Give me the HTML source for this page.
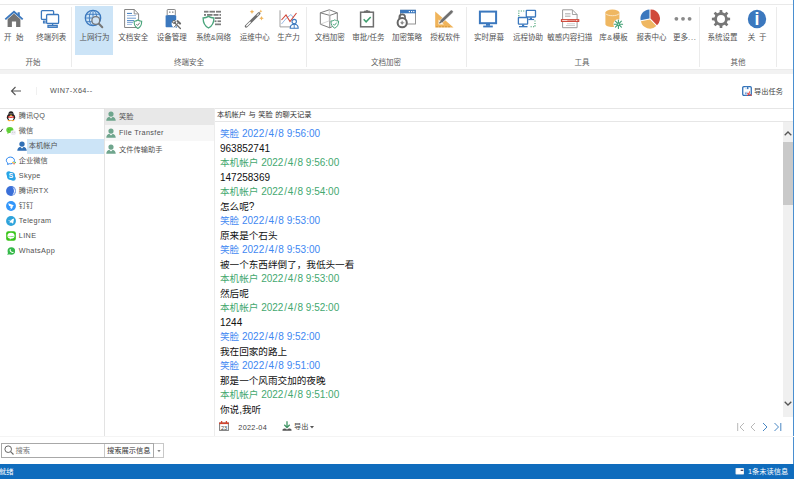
<!DOCTYPE html>
<html lang="zh-CN">
<head>
<meta charset="utf-8">
<title>上网行为</title>
<style>
*{box-sizing:border-box;margin:0;padding:0}
html,body{width:794px;height:479px;overflow:hidden;background:#fff}
body{position:relative;font-family:"Liberation Sans","Noto Sans CJK SC",sans-serif;color:#444;font-size:7.25px;line-height:1}
i{font-style:normal}
#ribbon{position:absolute;left:0;top:0;width:794px;height:69px;background:#fff}
#topline{position:absolute;left:0;top:4px;width:793px;height:1px;background:#e9e9e9}
#gap{position:absolute;left:0;top:69px;width:794px;height:5.3px;background:#f2f2f2;border-top:1px solid #ebebeb}
.selbg{position:absolute;left:75px;top:6px;width:38px;height:48.500px;background:#cce4f7}
.ic{position:absolute;top:9px;width:20px;height:20px;overflow:visible}
.lb{position:absolute;top:32.5px;width:60px;text-align:center;font-size:7.5px;line-height:10px;color:#525252;white-space:nowrap}
.sep{position:absolute;top:7px;width:1px;height:59.5px;background:#ebebeb}
.gl{position:absolute;top:57.5px;width:60px;text-align:center;font-size:7.5px;line-height:10px;color:#606060;white-space:nowrap}
#bar{position:absolute;left:0;top:74px;width:794px;height:34px;background:#fff}
#barline{position:absolute;left:0;top:108px;width:794px;height:1px;background:#e6e6e6}
#back{position:absolute;left:10px;top:12px;width:12px;height:10px}
#bsep{position:absolute;left:36px;top:13px;width:1px;height:8px;background:#f0f0f0}
#host{position:absolute;left:50px;top:12px;font-size:7.25px;line-height:10px;color:#505050;letter-spacing:.42px}
#expic{position:absolute;left:741.8px;top:12px;width:10px;height:10px}
#exp{position:absolute;left:754px;top:12.5px;font-size:7.25px;line-height:10px;color:#444;white-space:nowrap}
#tree{position:absolute;left:0;top:108px;width:105px;height:328px;border-right:1px solid #e3e3e3}
.tsel{position:absolute;left:27px;top:31px;width:77px;height:15px;background:#cce4f7}
.la{letter-spacing:.35px}
.lhov{position:absolute;left:0;top:17px;width:109px;height:16px;background:#f7f7f7}
.chev{position:absolute;left:0;top:20px;width:5px;height:5px}
.tic{position:absolute;width:10px;height:10px;overflow:visible}
.ti{position:absolute;height:15px;font-size:7.25px;line-height:15px;color:#505050;white-space:nowrap}
#list{position:absolute;left:105px;top:108px;width:110px;height:328px;border-right:1px solid #ececec}
.lsel{position:absolute;left:0;top:.8px;width:109px;height:16.2px;background:#e8e8e8}
#chat{position:absolute;left:215px;top:108px;width:579px;height:328px}
#chead{position:absolute;left:0;top:1px;width:579px;height:13px;border-bottom:1px solid #e6e6e6;font-size:7.25px;line-height:12px;padding-left:2px;color:#333;white-space:nowrap;word-spacing:.5px}
.m{position:absolute;left:5px;font-size:10px;line-height:14px;white-space:nowrap;color:#111}
.m b{font-weight:normal;font-size:9.6px}
.m.b{color:#4188f2}.m.g{color:#43a86f}
.m i{padding:0 .75px}
#sb{position:absolute;left:783.4px;top:122px;width:9.4px;height:294.5px;background:#f0f0f0}
#thumb{position:absolute;left:0;top:20px;width:9.4px;height:63px;background:#c9c9c9}
#sb svg{position:absolute;left:.7px;width:8px;height:5px}
#rline{position:absolute;left:792.6px;top:0;width:1.4px;height:464px;background:#4a8fd0}
#cfoot{position:absolute;left:0;top:313px;width:579px;height:12px;font-size:7.25px;line-height:12px;color:#444}
#cfoot span{position:absolute;top:0;white-space:nowrap}
#botline{position:absolute;left:0;top:435.5px;width:794px;height:1px;background:#f4f4f4}
#search{position:absolute;left:1px;top:442.5px;width:153px;height:15px;border:1px solid #a8a8a8;background:#fff}
#search .ph{position:absolute;left:13.5px;top:0;line-height:13px;color:#777}
#search .sel{position:absolute;left:105px;top:0;line-height:13px;color:#333;white-space:nowrap}
#search .v1{position:absolute;left:102px;top:0;width:1px;height:13px;background:#c8c8c8}
#ddb{position:absolute;left:154px;top:442.5px;width:10px;height:15px;border:1px solid #c8c8c8;border-left:none;background:#fff}
#status{position:absolute;left:0;top:463.5px;width:794px;height:15.5px;background:#0f6cbd;color:#fff;font-size:7.25px;line-height:16px}
#status span{position:absolute;top:0;white-space:nowrap}
</style>
</head>
<body>
<div id="ribbon">
<div id="topline"></div>
<div class="selbg"></div>
<svg class="ic" style="left:4.0px" viewBox="0 0 20 20"><path d="M3.6 10.2 10 4.6l6.4 5.6V18h-4.3v-5.4H7.9V18H3.6z" fill="#737373"/><path d="M13.6 3.2h2.2v4.2l-2.2-2z" fill="#3b78be"/><path d="M1.3 10.4 10 2.7l8.7 7.7" fill="none" stroke="#3b78be" stroke-width="1.9"/></svg>
<span class="lb" style="left:-16.2px"><i style="word-spacing:2.4px">开 始</i></span>
<svg class="ic" style="left:40.0px" viewBox="0 0 20 20"><g fill="none" stroke="#3b78be" stroke-width="1.3"><path d="M6 10.3H2.3a.9.9 0 0 1-.9-.9V2.500a.9.9 0 0 1 .9-.9h10.4a.9.9 0 0 1 .9.9V5"/><path d="M5.800 12.2H3.6v1.700h2.2"/><rect x="6.600" y="5.500" width="12" height="9" rx=".9" fill="#fff"/><path d="M12.600 14.500v2"/><rect x="8" y="16.600" width="9.200" height="1.700"/></g></svg>
<span class="lb" style="left:21.2px">终端列表</span>
<svg class="ic" style="left:84.0px" viewBox="0 0 20 20"><g fill="none" stroke="#3b78be"><circle cx="9" cy="9" r="7.700" stroke-width="1.300"/><ellipse cx="9" cy="9" rx="3.700" ry="7.700" stroke-width=".9"/><path d="M9 1.300v15.400M2.300 5.300h13.400M1.300 9h15.400M2.300 12.700h13.400" stroke-width=".9"/></g><circle cx="11.800" cy="11.500" r="3.900" fill="#cfe3f5" stroke="#777" stroke-width="1.300"/><path d="M14.900 14.700 18.300 18.200" stroke="#777" stroke-width="2" stroke-linecap="round"/></svg>
<span class="lb" style="left:64.6px">上网行为</span>
<svg class="ic" style="left:123.0px" viewBox="0 0 20 20"><path d="M1.600.5h9.600l4.400 4.400V18.500H1.600z" fill="#fff" stroke="#858585" stroke-width="1"/><path d="M11.200.5v4.400h4.400" fill="none" stroke="#858585" stroke-width=".9"/><path d="M4 4.400h5" stroke="#3b78be" stroke-width="1"/><path d="M4 6.600h9" stroke="#9dbbe0" stroke-width="1"/><path d="M4 9.200h9" stroke="#6f9bd0" stroke-width="1"/><path d="M4 11.700h7" stroke="#3b78be" stroke-width="1"/><path d="M4 13.600h6" stroke="#6f9bd0" stroke-width=".9"/><path d="M4 15.500h5" stroke="#9dbbe0" stroke-width=".9"/><path d="M14.900 11c1.200.9 2.500 1.200 3.800 1.200 0 3.400-.9 5.700-3.800 7.200-2.900-1.500-3.800-3.800-3.800-7.200 1.300 0 2.600-.3 3.800-1.200z" fill="#fff" stroke="#4aa57c" stroke-width="1.100"/><path d="M13.300 15l1.300 1.400 2.200-2.700" fill="none" stroke="#777" stroke-width="1"/></svg>
<span class="lb" style="left:103.2px">文档安全</span>
<svg class="ic" style="left:162.5px" viewBox="0 0 20 20"><rect x="4.200" y=".5" width="8.100" height="6" rx=".6" fill="#fff" stroke="#8a8a8a" stroke-width="1"/><rect x="6" y="2.500" width="1.500" height="1.300" fill="#8a8a8a"/><rect x="9" y="2.500" width="1.500" height="1.300" fill="#8a8a8a"/><rect x="2.600" y="6.200" width="10.600" height="12.100" rx=".7" fill="#3b78be"/><circle cx="12.200" cy="14.800" r="3.600" fill="#fff"/><path d="M12.800 18.500l1.600-1.800" stroke="#3b78be" stroke-width="1.200"/><g stroke="#fff" stroke-width="2.600" stroke-linecap="round"><path d="M11 13l6 6.200"/></g><g stroke="#6a6a6a" stroke-linecap="round"><path d="M11.200 13.200l6.200 6.300" stroke-width="1.300"/><path d="M14.600 12.200l2.400 2.300" stroke-width="2.200"/><path d="M15.600 13.600l-4.300 4.300" stroke-width="1"/></g><circle cx="11" cy="12.900" r="1.500" fill="none" stroke="#6a6a6a" stroke-width="1"/></svg>
<span class="lb" style="left:141.7px">设备管理</span>
<svg class="ic" style="left:202.0px" viewBox="0 0 20 20"><g fill="#7d7d7d"><rect x="2" y="1.800" width="4.500" height="1.800"/><rect x="7.500" y="1.800" width="5.500" height="1.800"/><rect x="14" y="1.800" width="5" height="1.800"/><rect x="2" y="5" width="2" height="1.800"/><rect x="5" y="5" width="5.500" height="1.800"/><rect x="11.500" y="5" width="5" height="1.800"/><rect x="17.500" y="5" width="1.500" height="1.800"/><rect x="13" y="8.200" width="6" height="1.800"/><rect x="12.500" y="11.400" width="2" height="1.700"/><rect x="15.500" y="11.400" width="3.500" height="1.700"/><rect x="13" y="14.500" width="6" height="1.700"/></g><path d="M6.500 7.400c1.700 1.200 3.500 1.600 5.400 1.600 0 4.700-1.300 7.900-5.400 10-4.100-2.100-5.400-5.300-5.400-10 1.900 0 3.700-.4 5.400-1.600z" fill="#fff" stroke="#4aa57c" stroke-width="1.300"/></svg>
<span class="lb" style="left:183.4px">系统&amp;网络</span>
<svg class="ic" style="left:244.0px" viewBox="0 0 20 20"><path d="M2.200 17.200 15 4.500" stroke="#6e6e6e" stroke-width="2.800" stroke-linecap="round"/><path d="M2.700 16.700 6.200 13.200" stroke="#fff" stroke-width="1.300" stroke-linecap="round"/><path d="M13.200 6.300l1.400-1.400" stroke="#ddd" stroke-width="1.200" stroke-linecap="round"/><g fill="#f0b45a"><path d="M8 .4l.7 1.600 1.600.7-1.600.7L8 5l-.7-1.600-1.600-.7 1.600-.7z"/><path d="M16.800.6l.5 1.100 1.100.5-1.100.5-.5 1.100-.5-1.100-1.100-.5 1.100-.5z"/><path d="M17.500 6.900l.7 1.600 1.600.7-1.600.7-.7 1.600-.7-1.600-1.600-.7 1.600-.7z"/></g></svg>
<span class="lb" style="left:224.8px">运维中心</span>
<svg class="ic" style="left:278.5px" viewBox="0 0 20 20"><path d="M1 1.300v16.600h11" fill="none" stroke="#a0a0a0" stroke-width="1"/><path d="M2.500 15l5-6 4.500-3.500 2.500 3.500" fill="none" stroke="#9bbbe6" stroke-width="1"/><path d="M2.500 11 7 6l4 6.500 6.500-8.500" fill="none" stroke="#d0483a" stroke-width="1.100"/><circle cx="15.200" cy="12.600" r="2.200" fill="#fff" stroke="#3b78be" stroke-width="1.100"/><path d="M11.200 19.200c0-2.800 1.700-4 4-4s4 1.200 4 4z" fill="#fff" stroke="#3b78be" stroke-width="1.100"/><path d="M15.200 15.300v3.900" stroke="#3b78be" stroke-width=".9"/></svg>
<span class="lb" style="left:258.4px">生产力</span>
<svg class="ic" style="left:318.7px" viewBox="0 0 20 20"><g fill="none" stroke="#7d7d7d" stroke-width="1" stroke-linejoin="round"><path d="M1.300 3.800 10.300.8l8 3v11.400l-7.500 3.600-9.500-3.600z"/><path d="M1.300 3.800l9.500 2.600 7.500-2.600M10.800 6.400V18.800"/><path d="M10.300.8v11l-9 3.400M10.300 11.800l8 3.400" stroke="#c4c4c4" stroke-width=".7"/></g><path d="M15.800 10.800c1.200.9 2.500 1.200 3.800 1.200 0 3.400-.9 5.700-3.800 7.200-2.900-1.500-3.800-3.800-3.800-7.200 1.300 0 2.600-.3 3.800-1.200z" fill="#fff" stroke="#4aa57c" stroke-width="1"/><path d="M14.200 14.900l1.300 1.400 2.200-2.700" fill="none" stroke="#4aa57c" stroke-width="1"/></svg>
<span class="lb" style="left:299.8px">文档加密</span>
<svg class="ic" style="left:357.3px" viewBox="0 0 20 20"><rect x="3.600" y="3.200" width="12.800" height="14.600" fill="#fff" stroke="#6e6e6e" stroke-width="1.500"/><path d="M7.300 3.200V2.100h1.600a1.200 1.200 0 0 1 2.200 0h1.600v1.100" fill="#6e6e6e" stroke="#6e6e6e" stroke-width=".9"/><path d="M6.700 10.300l2.400 2.500 4.600-4.800" fill="none" stroke="#3e9e6e" stroke-width="1.500"/></svg>
<span class="lb" style="left:338.4px">审批/任务</span>
<svg class="ic" style="left:395.5px" viewBox="0 0 20 20"><rect x="4.500" y="1.300" width="15" height="13.700" fill="#fff" stroke="#888" stroke-width=".9"/><rect x="4.100" y=".8" width="15.800" height="3.500" fill="#3b78be"/><g fill="#fff"><rect x="12.800" y="2" width="1.200" height="1.200"/><rect x="15" y="2" width="1.200" height="1.200"/><rect x="17.200" y="2" width="1.200" height="1.200"/></g><path d="M3.300 10V8.300a2.900 2.900 0 0 1 5.800 0V10" fill="none" stroke="#666" stroke-width="1.600"/><circle cx="6.200" cy="13.700" r="4.600" fill="#fff" stroke="#666" stroke-width="2"/><circle cx="6.200" cy="13.700" r="1.200" fill="#666"/><path d="M4 13.700h4.400M6.200 11.500v4.400" stroke="#999" stroke-width=".7"/></svg>
<span class="lb" style="left:377.0px">加密策略</span>
<svg class="ic" style="left:433.7px" viewBox="0 0 20 20"><path d="M1.200 2.500 19.500 18.500H1.200z" fill="#f0b45a"/><path d="M4.500 10.500l5.500 5H4.500z" fill="#fff" opacity=".85"/><g stroke="#b97f2a" stroke-width=".8"><path d="M3 17v1.300M6 17v1.300M9 17v1.300M12 17v1.300M15 17v1.300"/></g><path d="M5.200 14.600l1-3.400L16.400 1.400a1.400 1.400 0 0 1 2 0l.4.400a1.400 1.400 0 0 1 0 2L8.600 13.600z" fill="#707070" stroke="#fff" stroke-width=".6"/><path d="M5.200 14.600l.5-1.700 1.200 1.200z" fill="#333"/></svg>
<span class="lb" style="left:415.2px">授权软件</span>
<svg class="ic" style="left:477.8px" viewBox="0 0 20 20"><rect x="1.900" y="2.600" width="16.200" height="11.600" fill="#fff" stroke="#3b78be" stroke-width="2"/><path d="M8 15h4v1.800H8z" fill="#3b78be"/><rect x="5.200" y="16.600" width="9.600" height="1.800" fill="#3b78be"/></svg>
<span class="lb" style="left:458.9px">实时屏幕</span>
<svg class="ic" style="left:516.6px" viewBox="0 0 20 20"><g fill="none" stroke="#3e9e6e" stroke-width="1.100" stroke-dasharray="1.100 1.300"><path d="M1.800 7.200V2H8"/><path d="M18 11.500v6.300H12.500"/></g><g fill="#fff" stroke="#3b78be" stroke-width="1.300"><rect x="9.300" y="1.300" width="9.200" height="6.700" rx=".5"/><rect x="1.400" y="8.500" width="9.200" height="6.700" rx=".5"/></g><g fill="#3b78be"><rect x="12.800" y="8.500" width="2.200" height="1.600"/><rect x="11.300" y="9.900" width="5.800" height="1.200"/><rect x="5" y="15.500" width="2.200" height="1.500"/><rect x="2" y="17" width="8.500" height="1.300"/></g></svg>
<span class="lb" style="left:497.9px">远程协助</span>
<svg class="ic" style="left:559.9px" viewBox="0 0 20 20"><path d="M2.600.800h9.800l4.700 4.700V18.700H2.600z" fill="#fff" stroke="#9a9a9a" stroke-width="1"/><path d="M12.400.800v4.700h4.700" fill="none" stroke="#9a9a9a" stroke-width=".9"/><path d="M5 4.800h5.500M5 7.200h5.500" stroke="#c4c4c4" stroke-width="1.500"/><path d="M7 14.800h8M6 16.500h9" stroke="#cfcfcf" stroke-width="1.100"/><rect x=".9" y="10.100" width="18.400" height="2.900" fill="#d0483a"/><path d="M2.200 11.550h5.500" stroke="#fbe0dc" stroke-width="1"/><path d="M7.700 11.550h8" stroke="#e79a90" stroke-width="1"/><path d="M16 11.550h2.200" stroke="#fbe0dc" stroke-width="1" stroke-dasharray="1 .6"/></svg>
<span class="lb" style="left:539.7px">敏感内容扫描</span>
<svg class="ic" style="left:603.5px" viewBox="0 0 20 20"><path d="M1.400 3.400v11.800c0 1.500 3.100 2.700 7 2.700s7-1.200 7-2.700V3.400z" fill="#efb761"/><ellipse cx="8.400" cy="3.400" rx="7" ry="2.800" fill="#efb761"/><path d="M1.800 4.800c1 1.200 3.600 1.900 6.600 1.900s5.600-.7 6.600-1.900" fill="none" stroke="#fbe9cd" stroke-width=".9"/><circle cx="14.400" cy="15.200" r="5" fill="#fff"/><g stroke="#3e9e72" stroke-width="1.100" stroke-linecap="round"><path d="M14.400 11v8.400M10.200 15.200h8.400M11.400 12.200l6 6M11.400 18.200l6-6"/></g><circle cx="14.400" cy="15.200" r="1" fill="#fff" stroke="#3e9e72" stroke-width=".8"/></svg>
<span class="lb" style="left:583.5px">库<i style="padding:0 .4px">&amp;</i>模板</span>
<svg class="ic" style="left:640.3px" viewBox="0 0 20 20"><path d="M9.500 9.400V.4A9.200 9.200 0 0 0 .6 11.300z" fill="#3b78be"/><path d="M10.500 9.400V.4A9.200 9.200 0 0 1 17 16.300z" fill="#d0483a"/><path d="M10 10.400l6.300 6.600A9.200 9.200 0 0 1 .9 12.300z" fill="#efb761"/></svg>
<span class="lb" style="left:621.6px">报表中心</span>
<svg class="ic" style="left:673.0px" viewBox="0 0 20 20"><g fill="#8a8a8a"><circle cx="3.400" cy="9.800" r="1.900"/><circle cx="10" cy="9.800" r="1.900"/><circle cx="16.600" cy="9.800" r="1.900"/></g></svg>
<span class="lb" style="left:654.9px">更多<i style="letter-spacing:.9px">...</i></span>
<svg class="ic" style="left:711.0px" viewBox="0 0 20 20"><path d="M8.56 3.56L8.72 0.89L11.28 0.89L11.44 3.56L13.54 4.43L15.53 2.65L17.35 4.47L15.57 6.46L16.44 8.56L19.11 8.72L19.11 11.28L16.44 11.44L15.57 13.54L17.35 15.53L15.53 17.35L13.54 15.57L11.44 16.44L11.28 19.11L8.72 19.11L8.56 16.44L6.46 15.57L4.47 17.35L2.65 15.53L4.43 13.54L3.56 11.44L0.89 11.28L0.89 8.72L3.56 8.56L4.43 6.46L2.65 4.47L4.47 2.65L6.46 4.43z" fill="#777"/><circle cx="10" cy="10" r="6.700" fill="#777"/><circle cx="10" cy="10" r="4" fill="#fff"/></svg>
<span class="lb" style="left:692.6px">系统设置</span>
<svg class="ic" style="left:747.0px" viewBox="0 0 20 20"><circle cx="10" cy="10" r="9.200" fill="#3b78be"/><text x="10" y="16.300" text-anchor="middle" font-family="Liberation Sans,sans-serif" font-weight="bold" font-size="17.500" fill="#fff">i</text></svg>
<span class="lb" style="left:727.2px"><i style="word-spacing:1.8px">关 于</i></span>
<i class="sep" style="left:71px"></i>
<i class="sep" style="left:306px"></i>
<i class="sep" style="left:466px"></i>
<i class="sep" style="left:699px"></i>
<i class="sep" style="left:776px"></i>
<span class="gl" style="left:3px">开始</span>
<span class="gl" style="left:159px">终端安全</span>
<span class="gl" style="left:356px">文档加密</span>
<span class="gl" style="left:552px">工具</span>
<span class="gl" style="left:708px">其他</span>
</div>
<div id="gap"></div>
<div id="bar">
<svg id="back" viewBox="0 0 12 10"><path d="M11 5H1.500M5.500 1 1.500 5l4 4" fill="none" stroke="#555" stroke-width="1.100"/></svg>
<i id="bsep"></i>
<div id="host">WIN7-X64--</div>
<svg id="expic" viewBox="0 0 11 11"><rect x=".8" y=".8" width="9.400" height="9.400" rx="1.200" fill="#fff" stroke="#2f6fb6" stroke-width="1.400"/><rect x="3.400" y="1" width="4" height="2.600" fill="#d6e4f5"/><rect x="5.600" y="1" width="1.400" height="2.400" fill="#2f6fb6"/><rect x="3" y="6.300" width="3.600" height="3.700" fill="#c8daf0"/><rect x="3.600" y="7.300" width="1.200" height="1.800" fill="#5d8fcc"/><path d="M5.500 10.800c1.500-.8 2.500-2.300 2.700-4.800M5.800 8.300c1.500.3 3 1 5 2.200" fill="none" stroke="#e8312a" stroke-width="1.100"/></svg>
<div id="exp">导出任务</div>
</div>
<div id="barline"></div>
<div id="tree">
<div class="tsel"></div>
<svg class="chev" viewBox="0 0 6 6"><path d="M-1.500 2.500 .6 4.800 3.200 1" fill="none" stroke="#444" stroke-width="1.200"/></svg>
<svg class="tic" style="left:5.7px;top:2.8px" viewBox="0 0 12 12"><ellipse cx="6" cy="7.600" rx="5" ry="3.900" fill="#222"/><ellipse cx="6" cy="4" rx="3.100" ry="3.700" fill="#222"/><ellipse cx="6" cy="8.600" rx="3" ry="2.800" fill="#fff"/><path d="M2.400 6c2.300 1.100 4.900 1.100 7.200 0l.3 1.500c-2.500 1.100-5.300 1.100-7.800 0z" fill="#e8352b"/><ellipse cx="6" cy="5" rx="1.600" ry=".6" fill="#f5a623"/><circle cx="4.900" cy="3.300" r=".6" fill="#fff"/><circle cx="7.100" cy="3.300" r=".6" fill="#fff"/><ellipse cx="3.800" cy="11.500" rx="1.900" ry=".7" fill="#f5a623"/><ellipse cx="8.200" cy="11.500" rx="1.900" ry=".7" fill="#f5a623"/></svg><span class="ti" style="left:18.8px;top:0.3px">腾讯<i class="la">QQ</i></span>
<svg class="tic" style="left:5.7px;top:17.8px" viewBox="0 0 12 12"><ellipse cx="4.600" cy="4.800" rx="4.300" ry="3.700" fill="#62d038"/><path d="M2 7.500 1.500 9.600l2.200-1.300z" fill="#62d038"/><circle cx="3.200" cy="3.800" r=".55" fill="#3a9a1c"/><circle cx="6" cy="3.800" r=".55" fill="#3a9a1c"/><ellipse cx="8.700" cy="8" rx="3.300" ry="2.800" fill="#eeedf4"/><circle cx="7.600" cy="7.400" r=".4" fill="#888"/><circle cx="9.800" cy="7.400" r=".4" fill="#888"/></svg><span class="ti" style="left:18.8px;top:15.3px">微信</span>
<svg class="tic" style="left:16.7px;top:32.8px" viewBox="0 0 12 12"><circle cx="6" cy="3.700" r="3.200" fill="#2f6fb6"/><path d="M.3 11.800c0-3.200 1.900-4.700 3.600-5L6 8.900l2.100-2.100c1.700.3 3.600 1.800 3.600 5z" fill="#2f6fb6"/></svg><span class="ti" style="left:28.8px;top:30.3px">本机帐户</span>
<svg class="tic" style="left:5.7px;top:47.8px" viewBox="0 0 12 12"><path d="M5.300 1.300c-2.800 0-4.900 1.800-4.900 4 0 1.300.7 2.400 1.800 3.100L1.900 10.200l2-.9c.5.100.9.100 1.400.100 2.800 0 4.900-1.800 4.900-4s-2.100-4.100-4.900-4.100z" fill="#fff" stroke="#2b86f0" stroke-width="1.200"/><circle cx="9.600" cy="7.800" r="2.200" fill="#fff"/><circle cx="8.300" cy="7.900" r=".9" fill="#f5b400"/><circle cx="9.700" cy="6.600" r=".8" fill="#2b86f0"/><circle cx="11" cy="7.900" r=".9" fill="#45b649"/><circle cx="9.700" cy="9.300" r=".9" fill="#e8452b"/></svg><span class="ti" style="left:18.8px;top:45.3px">企业微信</span>
<svg class="tic" style="left:5.7px;top:62.8px" viewBox="0 0 12 12"><circle cx="6" cy="6" r="4.900" fill="#29a4e6"/><circle cx="3.400" cy="3.400" r="3" fill="#29a4e6"/><circle cx="8.600" cy="8.600" r="3" fill="#29a4e6"/><text x="6" y="8.900" text-anchor="middle" font-family="Liberation Sans,sans-serif" font-weight="bold" font-size="8" fill="#fff">S</text></svg><span class="ti" style="left:18.8px;top:60.3px"><i class="la">Skype</i></span>
<svg class="tic" style="left:5.7px;top:77.8px" viewBox="0 0 12 12"><circle cx="6" cy="6" r="5.900" fill="#3a6fd8"/><path d="M7.600 .9a5.600 5.600 0 0 1 0 10.200 7.500 7.500 0 0 0 0-10.200z" fill="#fff"/><path d="M9.800 2.200a5.500 5.500 0 0 1 0 7.600 8 8 0 0 0 0-7.600z" fill="#b9cff5"/></svg><span class="ti" style="left:18.8px;top:75.3px">腾讯<i class="la">RTX</i></span>
<svg class="tic" style="left:5.7px;top:92.8px" viewBox="0 0 12 12"><circle cx="6" cy="6" r="5.900" fill="#3296fa"/><path d="M2.700 2.600l6.600 2.600-1.900 2.200.8.300-2.900 2.700.7-2.100-1.100-.3.800-1.400L3.600 5.600z" fill="#fff"/></svg><span class="ti" style="left:18.8px;top:90.3px">钉钉</span>
<svg class="tic" style="left:5.7px;top:107.8px" viewBox="0 0 12 12"><circle cx="6" cy="6" r="5.900" fill="#2ea3db"/><path d="M2.200 5.900 9.700 2.900 8.500 9.300 5.800 7.400 4.600 8.600l-.2-2.100 3.700-3.100-4.400 2.700z" fill="#fff"/></svg><span class="ti" style="left:18.8px;top:105.3px"><i class="la">Telegram</i></span>
<svg class="tic" style="left:5.7px;top:122.8px" viewBox="0 0 12 12"><rect x=".2" y=".2" width="11.600" height="11.600" rx="2.500" fill="#3ac51a"/><ellipse cx="6" cy="5.600" rx="4.300" ry="3.500" fill="#fff"/><path d="M4.800 8.600l-.3 2 2.600-1.800z" fill="#fff"/><text x="6" y="6.700" text-anchor="middle" font-family="Liberation Sans,sans-serif" font-weight="bold" font-size="2.900" fill="#3ac51a">LINE</text></svg><span class="ti" style="left:18.8px;top:120.3px"><i class="la">LINE</i></span>
<svg class="tic" style="left:5.7px;top:137.8px" viewBox="0 0 12 12"><circle cx="6.400" cy="5.900" r="4.500" fill="#35b94a"/><path d="M1.600 10.700l1-3.100 2.200 2.100z" fill="#35b94a"/><path d="M4.600 3.800c.5-.5 1-.2 1.200.5.100.5-.4.800-.2 1.200.4.800 1 1.300 1.700 1.600.4.200.6-.5 1.100-.3.800.3 1 .8.500 1.300-.8.700-2 .3-3.100-.6-1-.9-1.900-2.400-1.200-3.700z" fill="#fff"/></svg><span class="ti" style="left:18.8px;top:135.3px"><i class="la">WhatsApp</i></span>
</div>
<div id="list">
<div class="lsel"></div><div class="lhov"></div>
<svg class="tic" style="left:1px;top:3.40px" viewBox="0 0 12 12"><circle cx="6" cy="3.700" r="3.100" fill="#6fa58d"/><path d="M.3 11.800c0-3.200 1.900-4.700 3.600-5L6 8.900l2.100-2.100c1.700.3 3.600 1.800 3.600 5z" fill="#6fa58d"/></svg><span class="ti" style="left:14px;top:1.10px">笑脸</span>
<svg class="tic" style="left:1px;top:19.65px" viewBox="0 0 12 12"><circle cx="6" cy="3.700" r="3.100" fill="#6fa58d"/><path d="M.3 11.800c0-3.200 1.900-4.700 3.600-5L6 8.900l2.100-2.100c1.700.3 3.600 1.800 3.600 5z" fill="#6fa58d"/></svg><span class="ti" style="left:14px;top:17.35px"><i class="la">File Transfer</i></span>
<svg class="tic" style="left:1px;top:35.90px" viewBox="0 0 12 12"><circle cx="6" cy="3.700" r="3.100" fill="#6fa58d"/><path d="M.3 11.800c0-3.200 1.900-4.700 3.600-5L6 8.900l2.100-2.100c1.700.3 3.600 1.800 3.600 5z" fill="#6fa58d"/></svg><span class="ti" style="left:14px;top:33.60px">文件传输助手</span>
</div>
<div id="chat">
<div id="chead">本机帐户 与 笑脸 的聊天记录</div>
<div class="m b" style="top:19.30px"><b>笑脸</b> 2022<i>/</i>4<i>/</i>8 9:56:00</div>
<div class="m k" style="top:33.79px">963852741</div>
<div class="m g" style="top:48.28px"><b>本机帐户</b> 2022<i>/</i>4<i>/</i>8 9:56:00</div>
<div class="m k" style="top:62.77px">147258369</div>
<div class="m g" style="top:77.26px"><b>本机帐户</b> 2022<i>/</i>4<i>/</i>8 9:54:00</div>
<div class="m k" style="top:91.75px"><b>怎么呢</b>?</div>
<div class="m b" style="top:106.24px"><b>笑脸</b> 2022<i>/</i>4<i>/</i>8 9:53:00</div>
<div class="m k" style="top:120.73px"><b>原来是个石头</b></div>
<div class="m b" style="top:135.22px"><b>笑脸</b> 2022<i>/</i>4<i>/</i>8 9:53:00</div>
<div class="m k" style="top:149.71px"><b>被一个东西绊倒了，我低头一看</b></div>
<div class="m g" style="top:164.20px"><b>本机帐户</b> 2022<i>/</i>4<i>/</i>8 9:53:00</div>
<div class="m k" style="top:178.69px"><b>然后呢</b></div>
<div class="m g" style="top:193.18px"><b>本机帐户</b> 2022<i>/</i>4<i>/</i>8 9:52:00</div>
<div class="m k" style="top:207.67px">1244</div>
<div class="m b" style="top:222.16px"><b>笑脸</b> 2022<i>/</i>4<i>/</i>8 9:52:00</div>
<div class="m k" style="top:236.65px"><b>我在回家的路上</b></div>
<div class="m b" style="top:251.14px"><b>笑脸</b> 2022<i>/</i>4<i>/</i>8 9:51:00</div>
<div class="m k" style="top:265.63px"><b>那是一个风雨交加的夜晚</b></div>
<div class="m g" style="top:280.12px"><b>本机帐户</b> 2022<i>/</i>4<i>/</i>8 9:51:00</div>
<div class="m k" style="top:294.61px"><b>你说</b>,<b>我听</b></div>
<div id="cfoot">
<svg style="position:absolute;left:4.300px;top:.4px;width:10px;height:10px" viewBox="0 0 10 10"><rect x=".6" y="2" width="8.800" height="7.400" fill="#fff" stroke="#7a7a7a" stroke-width="1"/><path d="M.1 2.300h9.800" stroke="#d2452f" stroke-width="1.600"/><path d="M2.600 0v2.200M7.400 0v2.200" stroke="#d2452f" stroke-width="1.300"/><text x="5" y="8.500" text-anchor="middle" font-family="Liberation Sans,sans-serif" font-size="5.500" fill="#333">23</text></svg>
<span style="left:23.300px;top:.8px;letter-spacing:.3px">2022-04</span>
<svg style="position:absolute;left:67px;top:.4px;width:10px;height:10px" viewBox="0 0 10 10"><path d="M5 .3v6M2.300 3.800 5 6.600 7.700 3.800" fill="none" stroke="#3e9464" stroke-width="1.300"/><path d="M.5 9.700V8.400l1.500-1h1.200L5 8.600l1.800-1.200H8l1.500 1v1.300z" fill="#555"/></svg>
<span style="left:79px">导出</span>
<svg style="position:absolute;left:95px;top:5px;width:4px;height:3px" viewBox="0 0 4 3"><path d="M0 0h4L2 2.500z" fill="#555"/></svg>
<svg style="position:absolute;left:521px;top:1px;width:48px;height:10px" viewBox="0 0 48 10"><g fill="none" stroke-width="1"><path d="M1.700 1v8M8 1 4 5l4 4" stroke="#b8b8b8"/><path d="M19 1l-4 4 4 4" stroke="#b8b8b8"/><path d="M27 1l4 4-4 4" stroke="#4a88c4"/><path d="M38.500 1l4 4-4 4M44.800 1v8" stroke="#4a88c4"/></g></svg>
</div>
</div>
<div id="sb"><svg style="top:9px" viewBox="0 0 8 5"><path d="M.7 4.300 4 1l3.300 3.300" fill="none" stroke="#555" stroke-width="1.300"/></svg><div id="thumb"></div><svg style="top:279px" viewBox="0 0 8 5"><path d="M.7.700 4 4 7.300.7" fill="none" stroke="#555" stroke-width="1.300"/></svg></div>
<div id="rline"></div>
<div id="botline"></div>
<div id="search"><svg style="position:absolute;left:1.500px;top:1.500px;width:10px;height:10px" viewBox="0 0 10 10"><circle cx="4.200" cy="4.200" r="3.300" fill="none" stroke="#666" stroke-width="1"/><path d="M6.600 6.600 9.500 9.500" stroke="#666" stroke-width="1.100"/></svg><span class="ph">搜索</span><i class="v1"></i><span class="sel">搜索展示信息</span></div>
<div id="ddb"><svg style="position:absolute;left:3px;top:6px;width:4px;height:3px" viewBox="0 0 4 3"><path d="M.3 0h3.400L2 2.200z" fill="#888"/></svg></div>
<div id="status"><span style="left:-1px">就绪</span>
<svg style="position:absolute;left:735.3px;top:4.5px;width:9.5px;height:6.6px" viewBox="0 0 9 7"><rect x="0" y="0" width="9" height="7" rx=".8" fill="#e8e8e8"/><rect x=".8" y=".8" width="7.400" height="5.400" fill="#fff"/><rect x="5.500" y="1.800" width="2.700" height="1.300" fill="#3a3a5a"/></svg>
<span style="left:748px">1条未读信息</span></div>
</body>
</html>
